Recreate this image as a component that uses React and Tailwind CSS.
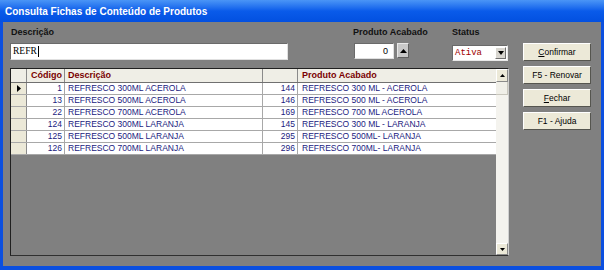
export default function App() {
  const rows = [
    [1, 'REFRESCO 300ML ACEROLA', 144, 'REFRESCO 300 ML - ACEROLA'],
    [13, 'REFRESCO 500ML ACEROLA', 146, 'REFRESCO 500 ML - ACEROLA'],
    [22, 'REFRESCO 700ML ACEROLA', 169, 'REFRESCO 700 ML ACEROLA'],
    [124, 'REFRESCO 300ML LARANJA', 145, 'REFRESCO 300 ML - LARANJA'],
    [125, 'REFRESCO 500ML LARANJA', 295, 'REFRESCO 500ML- LARANJA'],
    [126, 'REFRESCO 700ML LARANJA', 296, 'REFRESCO 700ML- LARANJA'],
  ];
  const btn =
    "w-[68px] h-[18px] bg-[#ece9d8] border border-t-white border-l-white border-b-[#55554f] border-r-[#55554f] flex items-center justify-center text-[8.5px] text-black leading-none";
  return (
    <div className="w-[604px] h-[270px] flex flex-col bg-[#0b4fe0] font-['Liberation_Sans',Arial,sans-serif] overflow-hidden">
      <div className="h-[22px] shrink-0 bg-gradient-to-b from-[#4a95f6] via-[#0a5bea] to-[#0350e0] flex items-center pl-[5px] text-white font-bold text-[10px]">
        Consulta Fichas de Conteúdo de Produtos
      </div>
      <div className="flex-1 mx-[3px] mb-[4px] bg-[#808080] flex pl-[7px] pt-[4px]">
        <div className="w-[499px] flex flex-col">
          <div className="flex h-[40px]">
            <div className="w-[278px] flex flex-col">
              <div className="h-[12px] text-[9px] font-bold text-[#111] leading-[12px] pl-[1px]">Descrição</div>
              <div className="mt-[5px] h-[17px] bg-white border border-t-[#6a6a6a] border-l-[#6a6a6a] border-b-[#e0e0e0] border-r-[#e0e0e0] flex items-center pl-[2px]">
                <span className="font-['Liberation_Serif',serif] text-[9.5px] text-black leading-none">REFR</span>
                <span className="w-[1px] h-[11px] bg-black ml-[1px]"></span>
              </div>
            </div>
            <div className="ml-[65px] w-[99px] flex flex-col">
              <div className="h-[12px] text-[9px] font-bold text-[#111] leading-[12px]">Produto Acabado</div>
              <div className="mt-[5px] flex items-start">
                <div className="w-[40px] h-[16px] bg-white ml-[1px] border border-t-[#6a6a6a] border-l-[#6a6a6a] border-b-[#e0e0e0] border-r-[#e0e0e0] flex items-center justify-end pr-[5px] text-[9px] text-black leading-none">0</div>
                <div className="ml-[3px] w-[12px] h-[15px] bg-[#c8c8c8] border border-t-[#e8e8e8] border-l-[#e8e8e8] border-b-[#606060] border-r-[#606060] flex items-center justify-center">
                  <svg width="7" height="4" viewBox="0 0 7 4"><path d="M0 4 L3.5 0 L7 4 Z" fill="#000" /></svg>
                </div>
              </div>
            </div>
            <div className="w-[56px] flex flex-col">
              <div className="h-[12px] text-[9px] font-bold text-[#111] leading-[12px]">Status</div>
              <div className="mt-[7px] w-[56px] h-[16px] bg-white border border-t-[#6a6a6a] border-l-[#6a6a6a] border-b-[#e8e8e8] border-r-[#e8e8e8] flex items-center">
                <span className="flex-1 pl-[2px] font-['Liberation_Mono',monospace] text-[9px] text-[#a00000] leading-none">Ativa</span>
                <div className="w-[11px] h-[12px] mr-[1px] bg-[#d8d6d0] border border-t-white border-l-white border-b-[#707070] border-r-[#707070] flex items-center justify-center">
                  <svg width="6" height="4" viewBox="0 0 6 4"><path d="M0 0 L6 0 L3 4 Z" fill="#000" /></svg>
                </div>
              </div>
            </div>
          </div>
          <div className="mt-[2px] w-[499px] h-[188px] border border-[#202020] border-r-[#d0d0d0] border-b-[#303030] flex">
            <div className="w-[485px] flex flex-col">
              <div className="h-[14px] flex bg-[#efeee6] border-b border-[#707070] text-[9px] font-bold text-[#7a0000] leading-none">
                <div className="w-[16px] border-r border-[#8a8a8a]"></div>
                <div className="w-[38px] border-r border-[#8a8a8a] flex items-center justify-end pr-[2px]">Código</div>
                <div className="w-[198px] border-r border-[#8a8a8a] flex items-center pl-[3px]">Descrição</div>
                <div className="w-[35px] border-r border-[#8a8a8a]"></div>
                <div className="w-[198px] flex items-center pl-[4px]">Produto Acabado</div>
              </div>
              {rows.map((r, i) => (
                <div key={i} className="h-[12px] flex text-[8.5px] text-[#1a1a80] leading-none border-b border-[#a8a8a8]">
                  <div className="w-[16px] bg-[#ece9d8] border-r border-[#8a8a8a] flex items-center justify-center">
                    {i === 0 && (
                      <svg width="4" height="7" viewBox="0 0 4 7"><path d="M0 0 L4 3.5 L0 7 Z" fill="#000" /></svg>
                    )}
                  </div>
                  <div className="w-[38px] bg-white border-r border-[#a8a8a8] flex items-center justify-end pr-[2px]">{r[0]}</div>
                  <div className="w-[198px] bg-white border-r border-[#a8a8a8] flex items-center pl-[3px]">{r[1]}</div>
                  <div className="w-[35px] bg-white border-r border-[#a8a8a8] flex items-center justify-end pr-[2px]">{r[2]}</div>
                  <div className="w-[198px] bg-white flex items-center pl-[4px]">{r[3]}</div>
                </div>
              ))}
            </div>
            <div className="w-[12px] flex flex-col bg-[#f4f3ee]">
              <div className="h-[13px] bg-[#ece9d8] border border-t-white border-l-white border-b-[#8a8a8a] border-r-[#8a8a8a] flex items-center justify-center">
                <svg width="5" height="3" viewBox="0 0 5 3"><path d="M0 3 L2.5 0 L5 3 Z" fill="#000" /></svg>
              </div>
              <div className="h-[13px] bg-[#f0efe8] border-b border-r border-[#c8c6bc]"></div>
              <div className="flex-1"></div>
              <div className="h-[12px] bg-[#ece9d8] border border-t-white border-l-white border-b-[#8a8a8a] border-r-[#8a8a8a] flex items-center justify-center">
                <svg width="5" height="3" viewBox="0 0 5 3"><path d="M0 0 L5 0 L2.5 3 Z" fill="#000" /></svg>
              </div>
            </div>
          </div>
        </div>
        <div className="ml-[14px] pt-[17px] flex flex-col gap-[5px]">
          <div className={btn}><span><span className="underline">C</span>onfirmar</span></div>
          <div className={btn}>F5 - Renovar</div>
          <div className={btn}><span><span className="underline">F</span>echar</span></div>
          <div className={btn}>F1 - Ajuda</div>
        </div>
      </div>
    </div>
  );
}
